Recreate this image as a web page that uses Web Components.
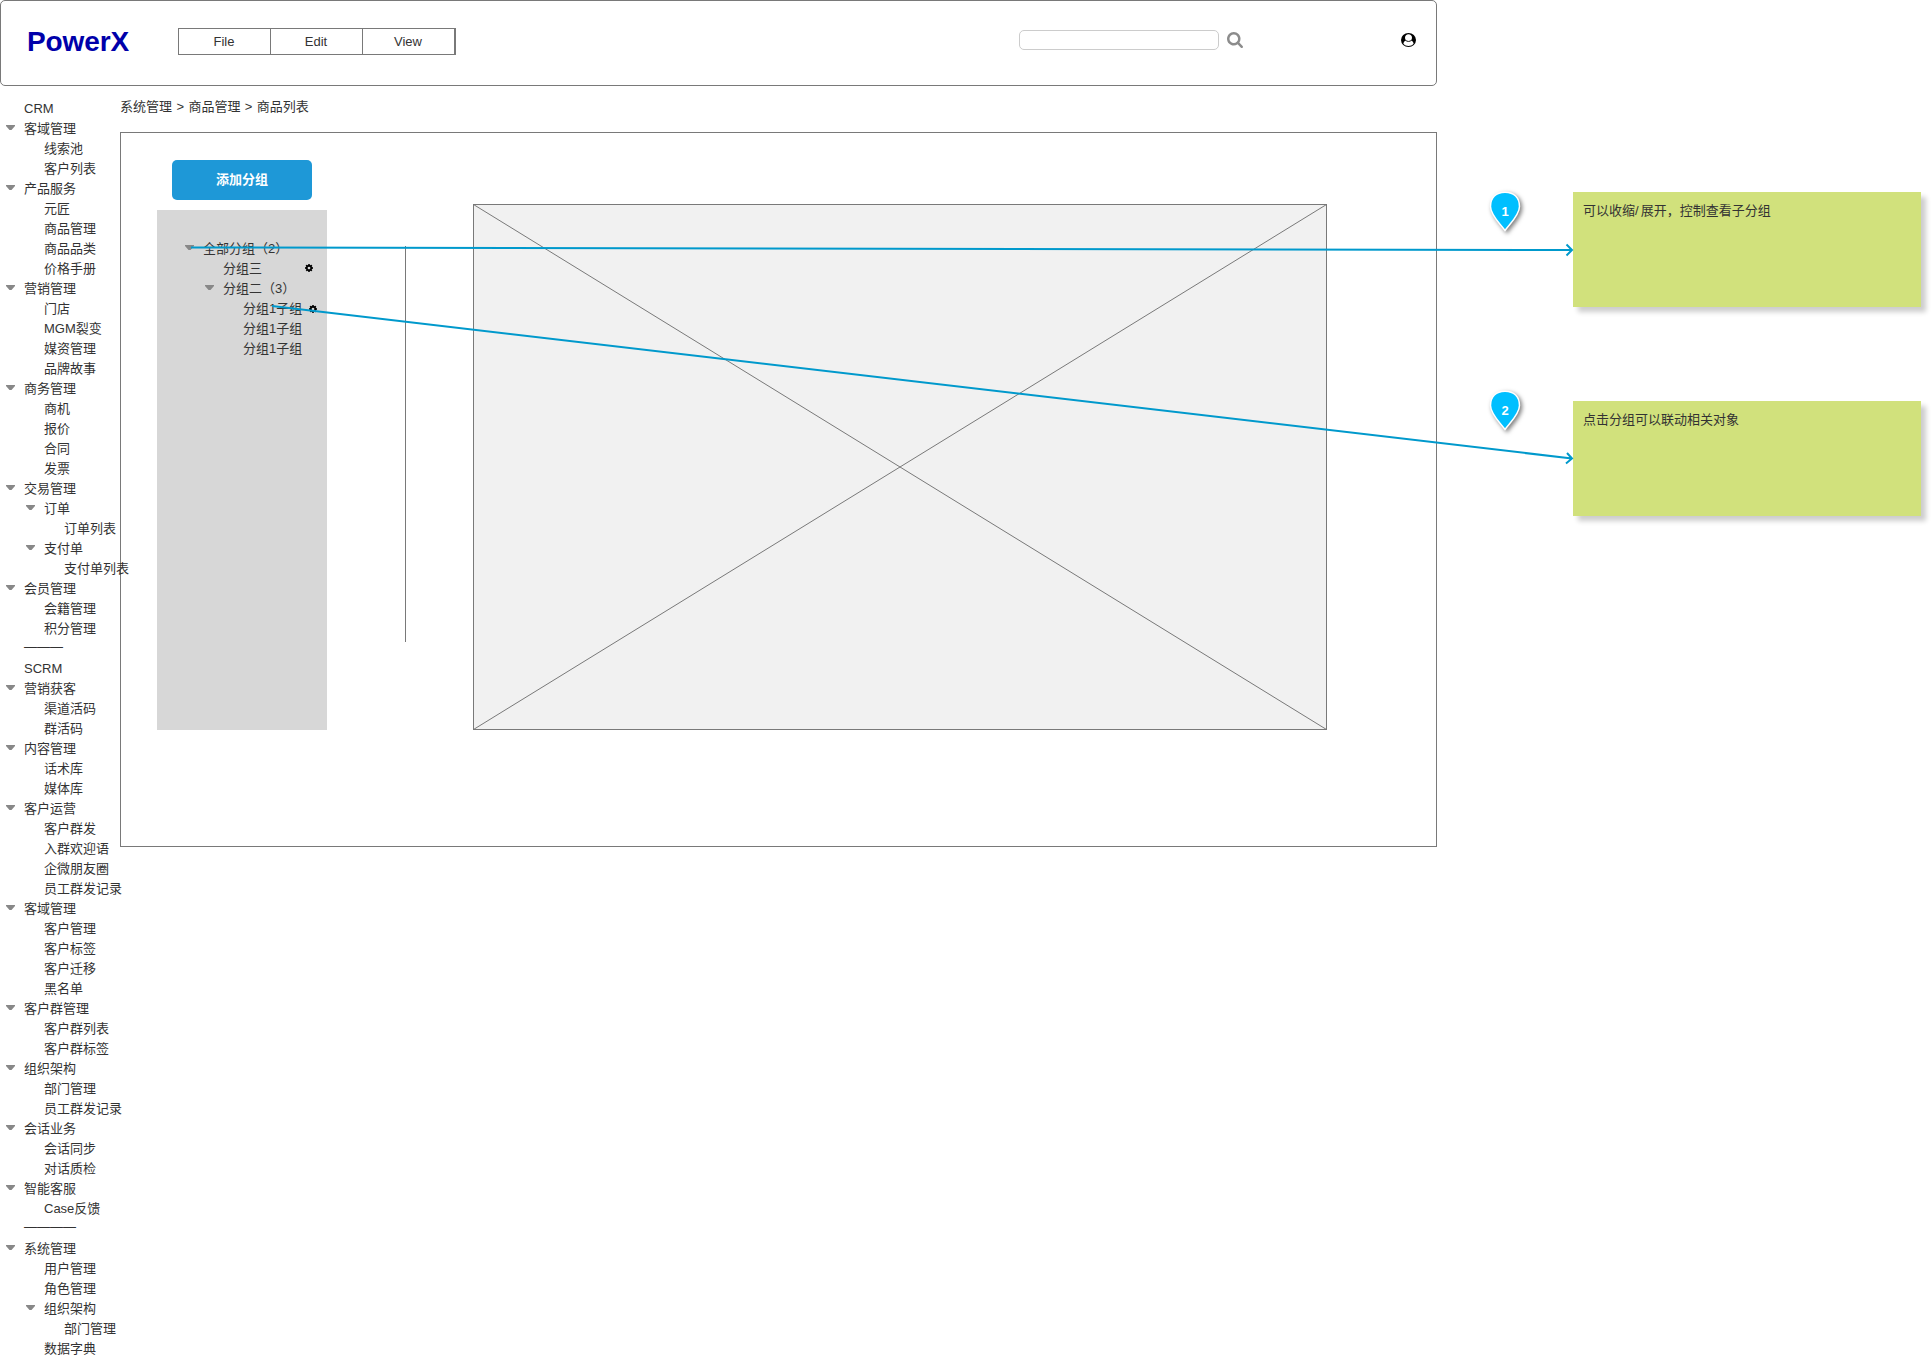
<!DOCTYPE html>
<html lang="zh-CN">
<head>
<meta charset="utf-8">
<title>PowerX</title>
<style>
html,body{margin:0;background:#fff}
body{font:13px/20px "Liberation Sans","Noto Sans CJK SC",sans-serif;color:#333;width:1932px;height:1358px;overflow:hidden}
</style>
</head>
<body>
<px-board></px-board>
<script>
const define = (name, html, setup) => {
  const t = document.createElement('template');
  t.innerHTML = html;
  customElements.define(name, class extends HTMLElement {
    constructor() {
      super();
      this.attachShadow({mode: 'open'}).append(t.content.cloneNode(true));
    }
    connectedCallback() { if (setup) setup(this, this.shadowRoot); }
  });
};

const ICONS = {
  cog: ['128 128 1536 1536', '<path d="M1152 896q0-106-75-181t-181-75-181 75-75 181 75 181 181 75 181-75 75-181zm512-109v222q0 12-8 23t-20 13l-185 28q-19 54-39 91 35 50 107 138 10 12 10 25t-9 23q-27 37-99 108t-94 71q-12 0-26-9l-138-108q-44 23-91 38-16 136-29 186-7 28-36 28h-222q-14 0-24.5-8.500t-11.500-21.500l-28-184q-49-16-90-37l-141 107q-10 9-25 9-14 0-25-11-126-114-165-168-7-10-7-23 0-12 8-23 15-21 51-66.500t54-70.500q-27-50-41-99l-183-27q-13-2-21-12.500t-8-23.500v-222q0-12 8-23t19-13l186-28q14-46 39-92-40-57-107-138-10-12-10-24 0-10 9-23 26-36 98.500-107.500t94.500-71.500q13 0 26 10l138 107q44-23 91-38 16-136 29-186 7-28 36-28h222q14 0 24.500 8.500t11.500 21.500l28 184q49 16 90 37l142-107q9-9 24-9 13 0 25 10 129 119 165 170 7 8 7 22 0 12-8 23-15 21-51 66.500t-54 70.500q26 50 41 98l183 28q13 2 21 12.500t8 23.500z"/>'],
  search: ['64 128 1664 1664', '<path d="M1216 832q0-185-131.500-316.500t-316.500-131.500-316.500 131.500-131.500 316.500 131.500 316.500 316.500 131.500 316.500-131.500 131.500-316.500zm512 832q0 52-38 90t-90 38q-54 0-90-38l-343-342q-179 124-399 124-143 0-273.500-55.500t-225-150-150-225-55.500-273.500 55.500-273.500 150-225 225-150 273.500-55.500 273.500 55.500 225 150 150 225 55.500 273.500q0 220-124 399l343 343q37 37 37 90z"/>'],
  user: ['0 0 15 14', '<ellipse cx="7.500" cy="7" rx="7.500" ry="7"/><path fill="#fff" d="M7.500 1.300c2 0 3.500 1.500 3.500 3.500 0 1.100-.4 2.100-1 2.800 1.400.3 2.300 1.500 2.600 3.200C11.300 12.200 9.500 13 7.500 13s-3.800-.8-5.100-2.200C2.700 9.100 3.600 7.900 5 7.600 4.400 6.900 4 5.900 4 4.800c0-2 1.500-3.500 3.500-3.500z"/><path fill="none" stroke="#000" stroke-width=".9" d="M4.600 7.300c1.500 1.500 4.300 1.500 5.800 0"/>'],
  caret: ['0 0 9 5', '<path d="M0 0h9v1L5.500 5h-2L0 1z"/>']
};
define('px-icon', `<style>:host{display:block;flex:none}svg{display:block;width:100%;height:100%;fill:currentColor}</style>`, (el, root) => {
  const [box, body] = ICONS[el.getAttribute('name')];
  root.innerHTML += `<svg viewBox="${box}" preserveAspectRatio="none">${body}</svg>`;
});

define('px-header', `<style>
:host{display:flex;align-items:flex-start;box-sizing:border-box;width:1437px;height:86px;border:1px solid #797979;border-radius:5px;background:#fff}
.logo{font-size:28px;font-weight:700;line-height:32px;color:#0000aa;margin:25px 0 0 26px;width:151px;letter-spacing:-.1px}
.menu{display:flex;box-sizing:border-box;width:278px;height:27px;margin-top:27px;border:1px solid #797979}
.menu span{box-sizing:border-box;flex:0 0 92px;text-align:center;line-height:23px;padding:1px 1px 0 0;border-right:1px solid #797979}
.box{box-sizing:border-box;width:200px;height:20px;margin:29px 0 0 563px;border:1px solid #ccc;border-radius:5px}
.s{width:16px;height:16px;margin:31px 0 0 8px;color:#8c8c8c}
.u{width:15px;height:14px;margin:32px 0 0 158px;color:#000}
</style><div class="logo">PowerX</div><div class="menu"><span>File</span><span>Edit</span><span>View</span></div><div class="box"></div><px-icon class="s" name="search"></px-icon><px-icon class="u" name="user"></px-icon>`);

define('px-row', `<style>
:host{display:flex;align-items:center;height:20px;white-space:nowrap;padding-left:calc(var(--level,0)*20px)}
.c{width:9px;height:5px;color:#888;margin:0 9px 1px 6px}
.pad{flex:none;width:24px}
span{display:block;height:20px;line-height:22px}
:host([rule]) span{line-height:18px}
</style><span><slot></slot></span><slot name="after"></slot>`, (el, root) => {
  el.style.setProperty('--level', el.getAttribute('level') || 0);
  const lead = document.createElement(el.hasAttribute('open') ? 'px-icon' : 'div');
  if (el.hasAttribute('open')) { lead.setAttribute('name', 'caret'); lead.className = 'c'; }
  else lead.className = 'pad';
  root.insertBefore(lead, root.querySelector('span'));
});

/* One entry per row: leading dots give the depth, "+" marks an expanded branch. */
const MENU = `CRM
+客域管理
.线索池
.客户列表
+产品服务
.元匠
.商品管理
.商品品类
.价格手册
+营销管理
.门店
.MGM裂变
.媒资管理
.品牌故事
+商务管理
.商机
.报价
.合同
.发票
+交易管理
.+订单
..订单列表
.+支付单
..支付单列表
+会员管理
.会籍管理
.积分管理
———
SCRM
+营销获客
.渠道活码
.群活码
+内容管理
.话术库
.媒体库
+客户运营
.客户群发
.入群欢迎语
.企微朋友圈
.员工群发记录
+客域管理
.客户管理
.客户标签
.客户迁移
.黑名单
+客户群管理
.客户群列表
.客户群标签
+组织架构
.部门管理
.员工群发记录
+会话业务
.会话同步
.对话质检
+智能客服
.Case反馈
————
+系统管理
.用户管理
.角色管理
.+组织架构
..部门管理
.数据字典`;
define('px-sidebar', `<style>:host{display:block;flex:none;width:120px;padding-top:12px;position:relative;z-index:1}</style>`, (el, root) => {
  for (const line of MENU.split('\n')) {
    const [, dots, plus, text] = line.match(/^(\.*)(\+?)(.*)$/);
    const row = document.createElement('px-row');
    row.setAttribute('level', dots.length);
    if (plus) row.setAttribute('open', '');
    if (text.startsWith('—')) row.setAttribute('rule', '');
    row.textContent = text;
    root.append(row);
  }
});

define('px-groups', `<style>
:host{display:block;width:170px}
.btn{width:140px;height:40px;margin-left:15px;border-radius:5px;background:#1e98d7;color:#fff;font-weight:700;text-align:center;line-height:40px}
.tree{box-sizing:border-box;height:520px;margin-top:10px;padding:28px 0 0 22px;background:#d7d7d7}
.g{width:8px;height:8px;color:#000}
</style><div class="btn">添加分组</div><div class="tree">
<px-row open>全部分组（2）</px-row>
<px-row level="1">分组三<px-icon slot="after" class="g" name="cog" style="margin-left:43px"></px-icon></px-row>
<px-row level="1" open>分组二（3）</px-row>
<px-row level="2">分组1子组<px-icon slot="after" class="g" name="cog" style="margin:1px 0 0 7px"></px-icon></px-row>
<px-row level="2">分组1子组</px-row>
<px-row level="2">分组1子组</px-row>
</div>`);

define('px-placeholder', `<style>:host{display:block;width:854px;height:526px}svg{display:block}</style>
<svg width="854" height="526" fill="none" stroke="#797979"><rect x=".5" y=".5" width="853" height="525" fill="#f1f1f1"/><path d="M.5.5l853 525M.5 525.500l853-525"/></svg>`);

define('px-content', `<style>
:host{display:block;width:1317px}
.crumb{box-sizing:border-box;padding-top:11px;height:46px;word-spacing:.78px}
.panel{box-sizing:border-box;display:flex;align-items:flex-start;height:715px;border:1px solid #797979}
px-groups{margin:27px 0 0 36px}
.rule{width:1px;height:396px;margin:113px 0 0 78px;background:#797979}
px-placeholder{margin:71px 0 0 67px}
</style><div class="crumb">系统管理 &gt; 商品管理 &gt; 商品列表</div><div class="panel"><px-groups></px-groups><div class="rule"></div><px-placeholder></px-placeholder></div>`);

define('px-note', `<style>
:host{display:flex;align-items:flex-start;height:115px}
.pin{flex:none;width:40px;height:48px;margin:var(--pin,-5px) 48px 0 -5px}
.pin svg{display:block;overflow:visible}
.note{box-sizing:border-box;width:348px;height:115px;padding:9px 10px;background:#d1e17c;box-shadow:5px 5px 5px rgba(0,0,0,.2)}
</style><div class="pin"><svg width="40" height="48"><path d="M20 43.500C16 37.500 5.500 28.500 5.500 19.500 5.500 10.500 11 5.300 20 5.300S34.500 10.500 34.500 19.500C34.500 28.500 24 37.500 20 43.500z" fill="#00bfff" stroke="#fff" stroke-width="1.500" style="filter:drop-shadow(2px 2px 2px rgba(0,0,0,.5))"/><text x="20" y="28.500" text-anchor="middle" font-size="13" font-weight="700" fill="#fff"></text></svg></div><div class="note"><slot></slot></div>`, (el, root) => {
  root.querySelector('text').textContent = el.getAttribute('n');
});

define('px-links', `<style>:host{position:absolute;inset:0;z-index:2;pointer-events:none}svg{display:block}</style>
<svg width="1932" height="1358" fill="none" stroke="#0099cc" stroke-width="2"><path d="M191 247.500L1572 250M1566.500 244.500L1572 250l-5.500 5.500"/><path d="M272 306L1572 458.500M1567 453l5 5.500-6 5"/></svg>`);

define('px-board', `<style>
:host{display:flex;position:relative;width:1932px;height:1358px}
.app{width:1437px}
.body{display:flex}
.notes{padding-left:53px}
.first{margin-top:192px}
.second{margin-top:94px}
.wide{letter-spacing:2px}
</style><div class="app"><px-header></px-header><div class="body"><px-sidebar></px-sidebar><px-content></px-content></div></div>
<div class="notes"><px-note class="first" n="1">可以收缩<span class="wide">/</span>展开，控制查看子分组</px-note><px-note class="second" n="2" style="--pin:-15px">点击分组可以联动相关对象</px-note></div><px-links></px-links>`);
</script>
</body>
</html>
